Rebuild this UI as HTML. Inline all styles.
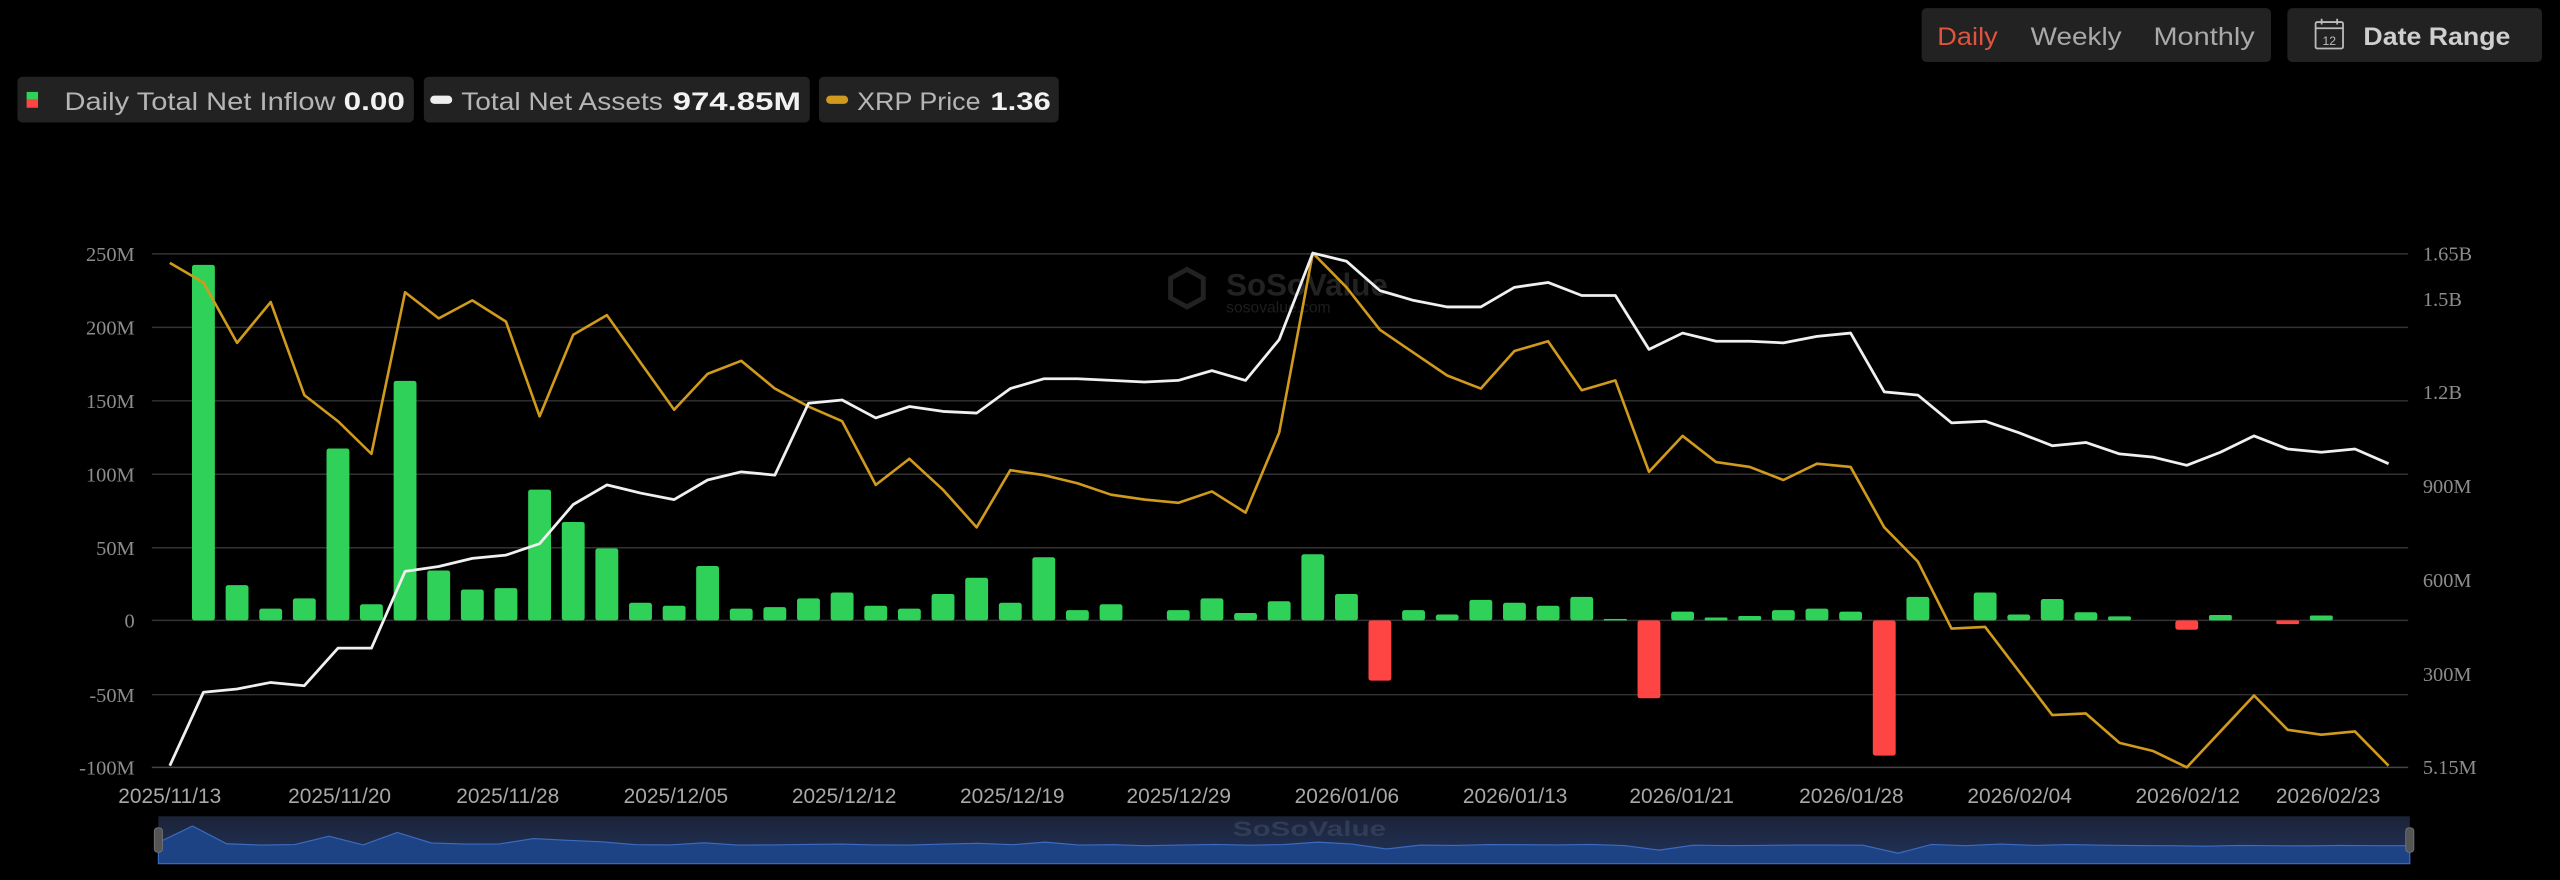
<!DOCTYPE html>
<html><head><meta charset="utf-8"><style>
html,body{margin:0;padding:0;background:#000;width:2560px;height:880px;overflow:hidden}
svg{display:block}
</style></head><body>
<svg width="2560" height="880" viewBox="0 0 1568 539" preserveAspectRatio="none" xmlns="http://www.w3.org/2000/svg">
<rect width="1568" height="539" fill="#000"/>
<!-- top right controls -->
<rect x="1177" y="5" width="214" height="33" rx="3" fill="#222"/>
<g font-family="Liberation Sans, sans-serif" font-size="15.5">
<text x="1186.6" y="27.5" fill="#e0533d" textLength="37" lengthAdjust="spacingAndGlyphs">Daily</text>
<text x="1243.8" y="27.5" fill="#a9a9a9" textLength="55.7" lengthAdjust="spacingAndGlyphs">Weekly</text>
<text x="1319" y="27.5" fill="#a9a9a9" textLength="62" lengthAdjust="spacingAndGlyphs">Monthly</text>
</g>
<rect x="1401" y="5" width="156" height="33" rx="3" fill="#222"/>
<g stroke="#bbb" stroke-width="1.1" fill="none">
<rect x="1418.3" y="13.5" width="16.8" height="16.2" rx="1"/>
<line x1="1418.3" y1="17.3" x2="1435.1" y2="17.3"/>
<line x1="1422" y1="11.5" x2="1422" y2="15"/>
<line x1="1431.5" y1="11.5" x2="1431.5" y2="15"/>
</g>
<text x="1426.7" y="27.5" fill="#bbb" font-family="Liberation Sans, sans-serif" font-size="7.5" text-anchor="middle">12</text>
<text x="1447.6" y="27.5" fill="#cfcfcf" font-family="Liberation Sans, sans-serif" font-size="15.5" font-weight="bold" textLength="90" lengthAdjust="spacingAndGlyphs">Date Range</text>

<!-- legend -->
<rect x="10.7" y="47" width="242.8" height="28" rx="3" fill="#222"/>
<rect x="259.6" y="47" width="236.4" height="28" rx="3" fill="#222"/>
<rect x="501.6" y="47" width="146.9" height="28" rx="3" fill="#222"/>
<rect x="16.3" y="56.3" width="7" height="4.8" fill="#30d158"/>
<rect x="16.3" y="61.1" width="7" height="4.9" fill="#ff4444"/>
<rect x="263.5" y="58.6" width="13.5" height="5" rx="2.5" fill="#eee"/>
<rect x="506" y="58.6" width="13.5" height="5" rx="2.5" fill="#d09a1c"/>
<g font-family="Liberation Sans, sans-serif" font-size="15.5">
<text x="39.5" y="67.4" fill="#b5b5b5" textLength="166" lengthAdjust="spacingAndGlyphs">Daily Total Net Inflow</text>
<text x="210.5" y="67.4" fill="#f2f2f2" font-weight="bold" textLength="37.5" lengthAdjust="spacingAndGlyphs">0.00</text>
<text x="282.5" y="67.4" fill="#b5b5b5" textLength="123.5" lengthAdjust="spacingAndGlyphs">Total Net Assets</text>
<text x="412" y="67.4" fill="#f2f2f2" font-weight="bold" textLength="78.6" lengthAdjust="spacingAndGlyphs">974.85M</text>
<text x="525" y="67.4" fill="#b5b5b5" textLength="75.6" lengthAdjust="spacingAndGlyphs">XRP Price</text>
<text x="606.6" y="67.4" fill="#f2f2f2" font-weight="bold" textLength="37" lengthAdjust="spacingAndGlyphs">1.36</text>
</g>

<!-- watermark -->
<g opacity="0.9">
<path d="M727 165 l10 5.5 v12 l-10 5.5 l-10 -5.5 v-12 z" fill="none" stroke="#262626" stroke-width="3"/>
<text x="751" y="181" fill="#262626" font-family="Liberation Sans, sans-serif" font-size="19" font-weight="bold" textLength="99" lengthAdjust="spacingAndGlyphs">SoSoValue</text>
<text x="751" y="191.5" fill="#222" font-family="Liberation Sans, sans-serif" font-size="9.5" textLength="64" lengthAdjust="spacingAndGlyphs">sosovalue.com</text>
</g>

<!-- grid -->
<g stroke="#333" stroke-width="0.9">
<line x1="93" y1="155.5" x2="1475" y2="155.5"/>
<line x1="93" y1="200.5" x2="1475" y2="200.5"/>
<line x1="93" y1="245.5" x2="1475" y2="245.5"/>
<line x1="93" y1="290.5" x2="1475" y2="290.5"/>
<line x1="93" y1="335.5" x2="1475" y2="335.5"/>
<line x1="93" y1="380" x2="1475" y2="380"/>
<line x1="93" y1="425.5" x2="1475" y2="425.5"/>
<line x1="93" y1="470" x2="1475" y2="470" stroke="#444"/>
</g>
<g font-family="Liberation Serif, serif" font-size="12.5" fill="#8c8c8c" text-anchor="end">
<text x="82.5" y="160">250M</text>
<text x="82.5" y="205">200M</text>
<text x="82.5" y="250">150M</text>
<text x="82.5" y="295">100M</text>
<text x="82.5" y="340">50M</text>
<text x="82.5" y="384.5">0</text>
<text x="82.5" y="430">-50M</text>
<text x="82.5" y="474.5">-100M</text>
</g>
<g font-family="Liberation Serif, serif" font-size="12.5" fill="#8c8c8c">
<text x="1484" y="159.5">1.65B</text>
<text x="1484" y="187.5">1.5B</text>
<text x="1484" y="244.5">1.2B</text>
<text x="1484" y="302">900M</text>
<text x="1484" y="359.5">600M</text>
<text x="1484" y="417">300M</text>
<text x="1484" y="474">5.15M</text>
</g>

<!-- bars -->
<g fill="#30d158">
<rect x="117.6" y="162.2" width="14" height="217.8" rx="1.5"/>
<rect x="138.2" y="358.4" width="14" height="21.6" rx="1.5"/>
<rect x="158.8" y="372.8" width="14" height="7.2" rx="1.5"/>
<rect x="179.4" y="366.5" width="14" height="13.5" rx="1.5"/>
<rect x="200.0" y="274.7" width="14" height="105.3" rx="1.5"/>
<rect x="220.5" y="370.1" width="14" height="9.9" rx="1.5"/>
<rect x="241.1" y="233.3" width="14" height="146.7" rx="1.5"/>
<rect x="261.7" y="349.4" width="14" height="30.6" rx="1.5"/>
<rect x="282.3" y="361.1" width="14" height="18.9" rx="1.5"/>
<rect x="302.9" y="360.2" width="14" height="19.8" rx="1.5"/>
<rect x="323.5" y="299.9" width="14" height="80.1" rx="1.5"/>
<rect x="344.1" y="319.7" width="14" height="60.3" rx="1.5"/>
<rect x="364.7" y="335.9" width="14" height="44.1" rx="1.5"/>
<rect x="385.3" y="369.2" width="14" height="10.8" rx="1.5"/>
<rect x="405.9" y="371" width="14" height="9" rx="1.5"/>
<rect x="426.4" y="346.7" width="14" height="33.3" rx="1.5"/>
<rect x="447.0" y="372.8" width="14" height="7.2" rx="1.5"/>
<rect x="467.6" y="371.9" width="14" height="8.1" rx="1.5"/>
<rect x="488.2" y="366.5" width="14" height="13.5" rx="1.5"/>
<rect x="508.8" y="362.9" width="14" height="17.1" rx="1.5"/>
<rect x="529.4" y="371" width="14" height="9" rx="1.5"/>
<rect x="550.0" y="372.8" width="14" height="7.2" rx="1.5"/>
<rect x="570.6" y="363.8" width="14" height="16.2" rx="1.5"/>
<rect x="591.2" y="353.9" width="14" height="26.1" rx="1.5"/>
<rect x="611.8" y="369.2" width="14" height="10.8" rx="1.5"/>
<rect x="632.3" y="341.3" width="14" height="38.7" rx="1.5"/>
<rect x="652.9" y="373.7" width="14" height="6.3" rx="1.5"/>
<rect x="673.5" y="370.1" width="14" height="9.9" rx="1.5"/>
<rect x="714.7" y="373.7" width="14" height="6.3" rx="1.5"/>
<rect x="735.3" y="366.5" width="14" height="13.5" rx="1.5"/>
<rect x="755.9" y="375.5" width="14" height="4.5" rx="1.5"/>
<rect x="776.5" y="368.3" width="14" height="11.7" rx="1.5"/>
<rect x="797.1" y="339.5" width="14" height="40.5" rx="1.5"/>
<rect x="817.7" y="363.8" width="14" height="16.2" rx="1.5"/>
<rect x="858.8" y="373.7" width="14" height="6.3" rx="1.5"/>
<rect x="879.4" y="376.4" width="14" height="3.6" rx="1.5"/>
<rect x="900.0" y="367.4" width="14" height="12.6" rx="1.5"/>
<rect x="920.6" y="369.2" width="14" height="10.8" rx="1.5"/>
<rect x="941.2" y="371" width="14" height="9" rx="1.5"/>
<rect x="961.8" y="365.6" width="14" height="14.4" rx="1.5"/>
<rect x="982.4" y="379.1" width="14" height="0.9"/>
<rect x="1023.6" y="374.6" width="14" height="5.4" rx="1.5"/>
<rect x="1044.1" y="378.2" width="14" height="1.8" rx="0.8"/>
<rect x="1064.7" y="377.3" width="14" height="2.7" rx="1"/>
<rect x="1085.3" y="373.7" width="14" height="6.3" rx="1.5"/>
<rect x="1105.9" y="372.8" width="14" height="7.2" rx="1.5"/>
<rect x="1126.5" y="374.6" width="14" height="5.4" rx="1.5"/>
<rect x="1167.7" y="365.6" width="14" height="14.4" rx="1.5"/>
<rect x="1208.9" y="362.9" width="14" height="17.1" rx="1.5"/>
<rect x="1229.5" y="376.4" width="14" height="3.6" rx="1.5"/>
<rect x="1250.0" y="366.9" width="14" height="13.1" rx="1.5"/>
<rect x="1270.6" y="375" width="14" height="5" rx="1.5"/>
<rect x="1291.2" y="377.5" width="14" height="2.5" rx="1"/>
<rect x="1353.0" y="376.7" width="14" height="3.3" rx="1"/>
<rect x="1414.8" y="377" width="14" height="3" rx="1"/>
</g>
<g fill="#ff4444">
<rect x="838.2" y="380" width="14" height="36.9" rx="1.5"/>
<rect x="1003.0" y="380" width="14" height="47.7" rx="1.5"/>
<rect x="1147.1" y="380" width="14" height="82.8" rx="1.5"/>
<rect x="1332.4" y="380" width="14" height="5.7" rx="1.5"/>
<rect x="1394.2" y="380" width="14" height="2.3" rx="1"/>
</g>

<!-- XRP price line -->
<polyline fill="none" stroke="#d09a1c" stroke-width="1.6" stroke-linejoin="round" points="104,161 124.6,173 145.2,210 165.8,185 186.4,242 207,258 227.5,278 248.1,179 268.7,195 289.3,184 309.9,197 330.5,255 351.1,205 371.7,193 392.3,222 412.9,251 433.4,229 454,221 474.6,238 495.2,249 515.8,258 536.4,297 557,281 577.6,300 598.2,323 618.8,288 639.3,291 659.9,296 680.5,303 701.1,306 721.7,308 742.3,301 762.9,314 783.5,265 804.1,155 824.7,176 845.2,202 865.8,216 886.4,230 907,238 927.6,215 948.2,209 968.8,239 989.4,233 1010,289 1030.6,267 1051.1,283 1071.7,286 1092.3,294 1112.9,284 1133.5,286 1154.1,323 1174.7,344 1195.3,385 1215.9,384 1236.5,411 1257,438 1277.6,437 1298.2,455 1318.8,460 1339.4,470 1360,448 1380.6,426 1401.2,447 1421.8,450 1442.4,448 1463,469"/>
<!-- Total net assets line -->
<polyline fill="none" stroke="#f0f0f0" stroke-width="1.7" stroke-linejoin="round" points="104,469 124.6,424 145.2,422 165.8,418 186.4,420 207,397 227.5,397 248.1,350 268.7,347 289.3,342 309.9,340 330.5,333 351.1,309 371.7,297 392.3,302 412.9,306 433.4,294 454,289 474.6,291 495.2,247 515.8,245 536.4,256 557,249 577.6,252 598.2,253 618.8,238 639.3,232 659.9,232 680.5,233 701.1,234 721.7,233 742.3,227 762.9,233 783.5,208 804.1,155 824.7,160 845.2,178 865.8,184 886.4,188 907,188 927.6,176 948.2,173 968.8,181 989.4,181 1010,214 1030.6,204 1051.1,209 1071.7,209 1092.3,210 1112.9,206 1133.5,204 1154.1,240 1174.7,242 1195.3,259 1215.9,258 1236.5,265 1257,273 1277.6,271 1298.2,278 1318.8,280 1339.4,285 1360,277 1380.6,267 1401.2,275 1421.8,277 1442.4,275 1463,284"/>

<!-- date labels -->
<g font-family="Liberation Sans, sans-serif" font-size="12.8" fill="#a8a8a8" text-anchor="middle">
<text x="104" y="492">2025/11/13</text>
<text x="208" y="492">2025/11/20</text>
<text x="311" y="492">2025/11/28</text>
<text x="414" y="492">2025/12/05</text>
<text x="517" y="492">2025/12/12</text>
<text x="620" y="492">2025/12/19</text>
<text x="722" y="492">2025/12/29</text>
<text x="825" y="492">2026/01/06</text>
<text x="928" y="492">2026/01/13</text>
<text x="1030" y="492">2026/01/21</text>
<text x="1134" y="492">2026/01/28</text>
<text x="1237" y="492">2026/02/04</text>
<text x="1340" y="492">2026/02/12</text>
<text x="1426" y="492">2026/02/23</text>
</g>

<!-- navigator -->
<defs><linearGradient id="nb" x1="0" y1="0" x2="0" y2="1"><stop offset="0" stop-color="#1b2338"/><stop offset="1" stop-color="#22335a"/></linearGradient></defs>
<rect x="97" y="500" width="1379" height="29" fill="url(#nb)"/>
<polygon fill="#1d4384" stroke="#3b6cc2" stroke-width="0.7" points="97,529 97,516 117.9,505.9 138.8,516.8 159.7,517.6 180.6,517.3 201.5,512.2 222.4,517.5 243.3,509.9 264.2,516.3 285,517 306,516.9 326.8,513.6 347.7,514.7 368.6,515.6 389.5,517.4 410.4,517.5 431.3,516.2 452,517.6 473,517.5 494,517.2 515,517 536,517.5 557,517.6 578,517 599,516.5 620,517.4 640,515.8 661,517.6 682,517.4 702,518 723,517.6 744,517.2 765,517.7 786,517.3 807.4,515.8 828,517 849.2,520 870,517.6 891,517.8 912,517.3 933,517.4 954,517.5 974,517.2 995,517.9 1016.3,520.7 1037,517.7 1058,517.9 1079,517.8 1100,517.6 1120,517.6 1141,517.7 1162.6,522.6 1183,517.2 1204,518 1225,517 1246,517.8 1267,517.3 1288,517.7 1309,517.9 1330,518 1351,518.3 1371,517.8 1392,518 1413,518.1 1434,517.8 1455,518 1476,518 1476,529"/>
<rect x="94.5" y="507" width="5" height="15" rx="2" fill="#555" stroke="#777" stroke-width="0.5"/>
<rect x="1473.5" y="507" width="5" height="15" rx="2" fill="#555" stroke="#777" stroke-width="0.5"/>
<text x="755" y="512" fill="#3a4560" opacity="0.7" font-family="Liberation Sans, sans-serif" font-size="13" font-weight="bold" textLength="94" lengthAdjust="spacingAndGlyphs">SoSoValue</text>
</svg>
</body></html>
